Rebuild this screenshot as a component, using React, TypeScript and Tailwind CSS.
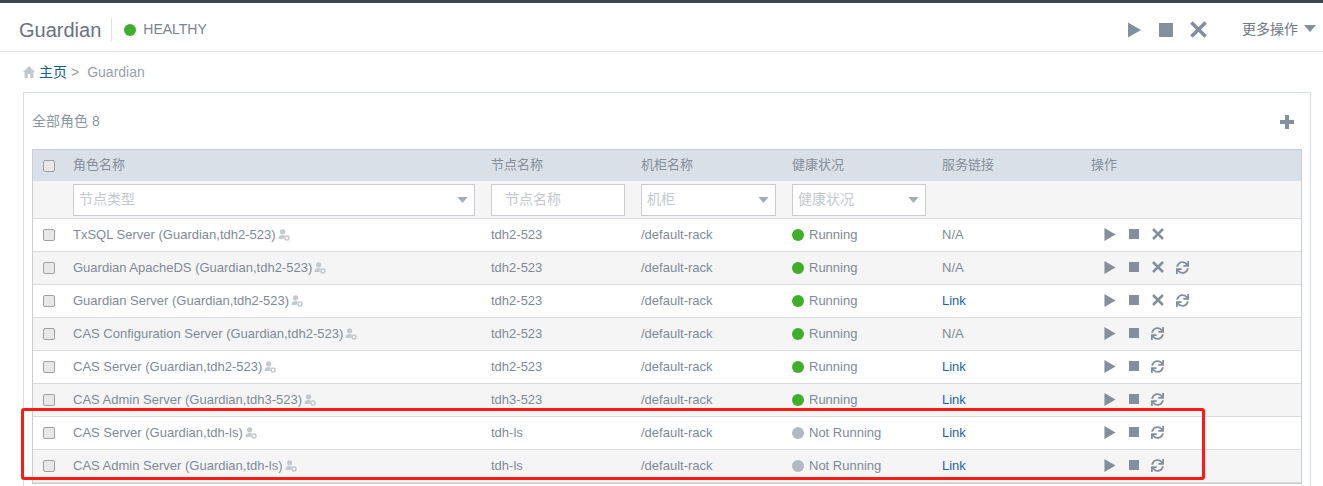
import { FaSync } from 'react-icons/fa'

const font = { fontFamily: '"Liberation Sans", "Noto Sans CJK SC", sans-serif' }

const columns = 'grid grid-cols-[40px_418px_150px_151px_150px_149px_1fr]'

type Role = {
  name: string
  node: string
  running: boolean
  link: boolean
  remove: boolean
  restart: boolean
}

const roles: Role[] = [
  { name: 'TxSQL Server (Guardian,tdh2-523)', node: 'tdh2-523', running: true, link: false, remove: true, restart: false },
  { name: 'Guardian ApacheDS (Guardian,tdh2-523)', node: 'tdh2-523', running: true, link: false, remove: true, restart: true },
  { name: 'Guardian Server (Guardian,tdh2-523)', node: 'tdh2-523', running: true, link: true, remove: true, restart: true },
  { name: 'CAS Configuration Server (Guardian,tdh2-523)', node: 'tdh2-523', running: true, link: false, remove: false, restart: true },
  { name: 'CAS Server (Guardian,tdh2-523)', node: 'tdh2-523', running: true, link: true, remove: false, restart: true },
  { name: 'CAS Admin Server (Guardian,tdh3-523)', node: 'tdh3-523', running: true, link: true, remove: false, restart: true },
  { name: 'CAS Server (Guardian,tdh-ls)', node: 'tdh-ls', running: false, link: true, remove: false, restart: true },
  { name: 'CAS Admin Server (Guardian,tdh-ls)', node: 'tdh-ls', running: false, link: true, remove: false, restart: true },
]

function Checkbox() {
  return <div className="w-[12px] h-[12px] rounded-[2px] border border-[#a0a0a0] bg-[#e8e8e8]" />
}

function Play({ className }: { className: string }) {
  return (
    <svg viewBox="0 0 12 14" className={className} fill="currentColor">
      <polygon points="0,0 12,7 0,14" />
    </svg>
  )
}

function Caret({ className }: { className: string }) {
  return (
    <svg viewBox="0 0 12 7" className={className} fill="currentColor">
      <polygon points="0,0 12,0 6,7" />
    </svg>
  )
}

function Cross({ className }: { className: string }) {
  return (
    <svg viewBox="0 0 12 12" className={className} stroke="currentColor" strokeWidth="2.5" fill="none">
      <path d="M1 1 L11 11 M11 1 L1 11" />
    </svg>
  )
}

function Plus({ className }: { className: string }) {
  return (
    <svg viewBox="0 0 14 14" className={className} fill="currentColor">
      <path d="M5 0 H9 V5 H14 V9 H9 V14 H5 V9 H0 V5 H5 Z" />
    </svg>
  )
}

function Home({ className }: { className: string }) {
  return (
    <svg viewBox="0 0 12 12" className={className} fill="currentColor">
      <path d="M6 0 L12 6 H10.4 V12 H7.3 V8 H4.7 V12 H1.6 V6 H0 Z" />
    </svg>
  )
}

function RoleIcon({ className }: { className: string }) {
  return (
    <svg viewBox="0 0 12 12" className={className} fill="currentColor">
      <circle cx="4.6" cy="2.8" r="2.6" />
      <path d="M0.5 10 C0.5 7 2.2 6 4.6 6 C5.6 6 6.4 6.2 7 6.6 L5.4 10 Z" />
      <circle cx="9" cy="9" r="2" fill="none" stroke="currentColor" strokeWidth="1.5" />
    </svg>
  )
}

function FilterBox({ label, width, caret }: { label: string; width: string; caret?: boolean }) {
  return (
    <div className={`${width} h-[32px] flex items-center justify-between border border-[#c9cdd2] bg-white pl-[5px] pr-[5px] text-[14px] text-[#c3c8ce]`}>
      <span>{label}</span>
      {caret && <Caret className="w-[11px] h-[6px] mr-[1px] text-[#a4acb6]" />}
    </div>
  )
}

function RoleRow({ role, odd }: { role: Role; odd: boolean }) {
  return (
    <div className={`${columns} h-[33px] items-center border-b border-[#dcdcdc] text-[13px] text-[#7f8a98] ${odd ? 'bg-[#f5f5f5]' : 'bg-white'}`}>
      <div className="pl-[10px]">
        <Checkbox />
      </div>
      <div className="flex items-center gap-[2px]">
        <span>{role.name}</span>
        <RoleIcon className="w-[12px] h-[12px] text-[#c4c9cf]" />
      </div>
      <div>{role.node}</div>
      <div>/default-rack</div>
      <div className="flex items-center gap-[5px]">
        <span className={`w-[12px] h-[12px] rounded-full ${role.running ? 'bg-[#3fae2a]' : 'bg-[#b4b9c1]'}`} />
        <span>{role.running ? 'Running' : 'Not Running'}</span>
      </div>
      <div className={role.link ? 'text-[#1e62a8]' : ''}>{role.link ? 'Link' : 'N/A'}</div>
      <div className="flex items-center pl-[13px] pb-[2px] text-[#858f9b]">
        <Play className="w-[12px] h-[13px]" />
        <span className="w-[10px] h-[10px] ml-[13px] bg-[#858f9b]" />
        {role.remove && <Cross className="w-[12px] h-[12px] ml-[13px]" />}
        {role.restart && <FaSync className="w-[13px] h-[13px] ml-[12px]" />}
      </div>
    </div>
  )
}

export default function App() {
  return (
    <div className="relative h-[486px] overflow-hidden bg-white" style={font}>
      <div className="h-[3px] bg-[#3a4651]" />
      <div className="h-[49px] flex items-center border-b border-[#dfe2e6] pl-[19px] pr-[7px] pt-[5px]">
        <span className="text-[20px] text-[#69737f]">Guardian</span>
        <div className="w-px h-[23px] ml-[10px] bg-[#dfe2e6]" />
        <span className="w-[12px] h-[12px] ml-[12px] rounded-full bg-[#3fae2a]" />
        <span className="ml-[7px] text-[14px] text-[#7a8491]">HEALTHY</span>
        <div className="ml-auto flex items-center text-[#858f9b]">
          <Play className="w-[13px] h-[16px]" />
          <span className="w-[14px] h-[14px] ml-[18px] bg-[#858f9b]" />
          <Cross className="w-[17px] h-[17px] ml-[17px]" />
          <span className="ml-[35px] text-[14px] text-[#6f7985]">更多操作</span>
          <Caret className="w-[12px] h-[7px] ml-[6px] mb-[3px]" />
        </div>
      </div>
      <div className="h-[40px] flex items-center pl-[23px] text-[14px] text-[#98a1ac]">
        <Home className="w-[12px] h-[12px] text-[#c2c7cd]" />
        <span className="ml-[4px] text-[#0d5c9e]">主页</span>
        <span className="ml-[4px]">&gt;</span>
        <span className="ml-[8px]">Guardian</span>
      </div>
      <div className="ml-[23px] w-[1288px] h-[400px] border border-[#d8dee6] pl-[8px]">
        <div className="h-[56px] flex items-center justify-between pr-[16px] pt-[1px] text-[14px] text-[#8d97a3]">
          <span>全部角色 8</span>
          <Plus className="w-[14px] h-[14px] text-[#858f9b]" />
        </div>
        <div className="w-[1270px] border-x border-t border-b border-[#c9ced3]">
          <div className={`${columns} h-[31px] items-center bg-[#dae0e8] text-[13px] text-[#858f9b]`}>
            <div className="pl-[10px]">
              <Checkbox />
            </div>
            <div className="pb-[2px]">角色名称</div>
            <div className="pb-[2px]">节点名称</div>
            <div className="pb-[2px]">机柜名称</div>
            <div className="pb-[2px]">健康状况</div>
            <div className="pb-[2px]">服务链接</div>
            <div className="pb-[2px]">操作</div>
          </div>
          <div className={`${columns} h-[38px] items-center bg-[#f5f5f5] border-b border-[#dcdcdc]`}>
            <div />
            <FilterBox label="节点类型" width="w-[402px]" caret />
            <div className="[&>div]:pl-[13px]">
              <FilterBox label="节点名称" width="w-[134px]" />
            </div>
            <FilterBox label="机柜" width="w-[135px]" caret />
            <FilterBox label="健康状况" width="w-[134px]" caret />
            <div />
            <div />
          </div>
          {roles.map((role, i) => (
            <RoleRow key={role.name} role={role} odd={i % 2 === 1} />
          ))}
        </div>
      </div>
      <div className="absolute left-[21px] top-[408px] w-[1184px] h-[72px] rounded-[3px] border-[3px] border-[#ff1a12]" />
    </div>
  )
}
